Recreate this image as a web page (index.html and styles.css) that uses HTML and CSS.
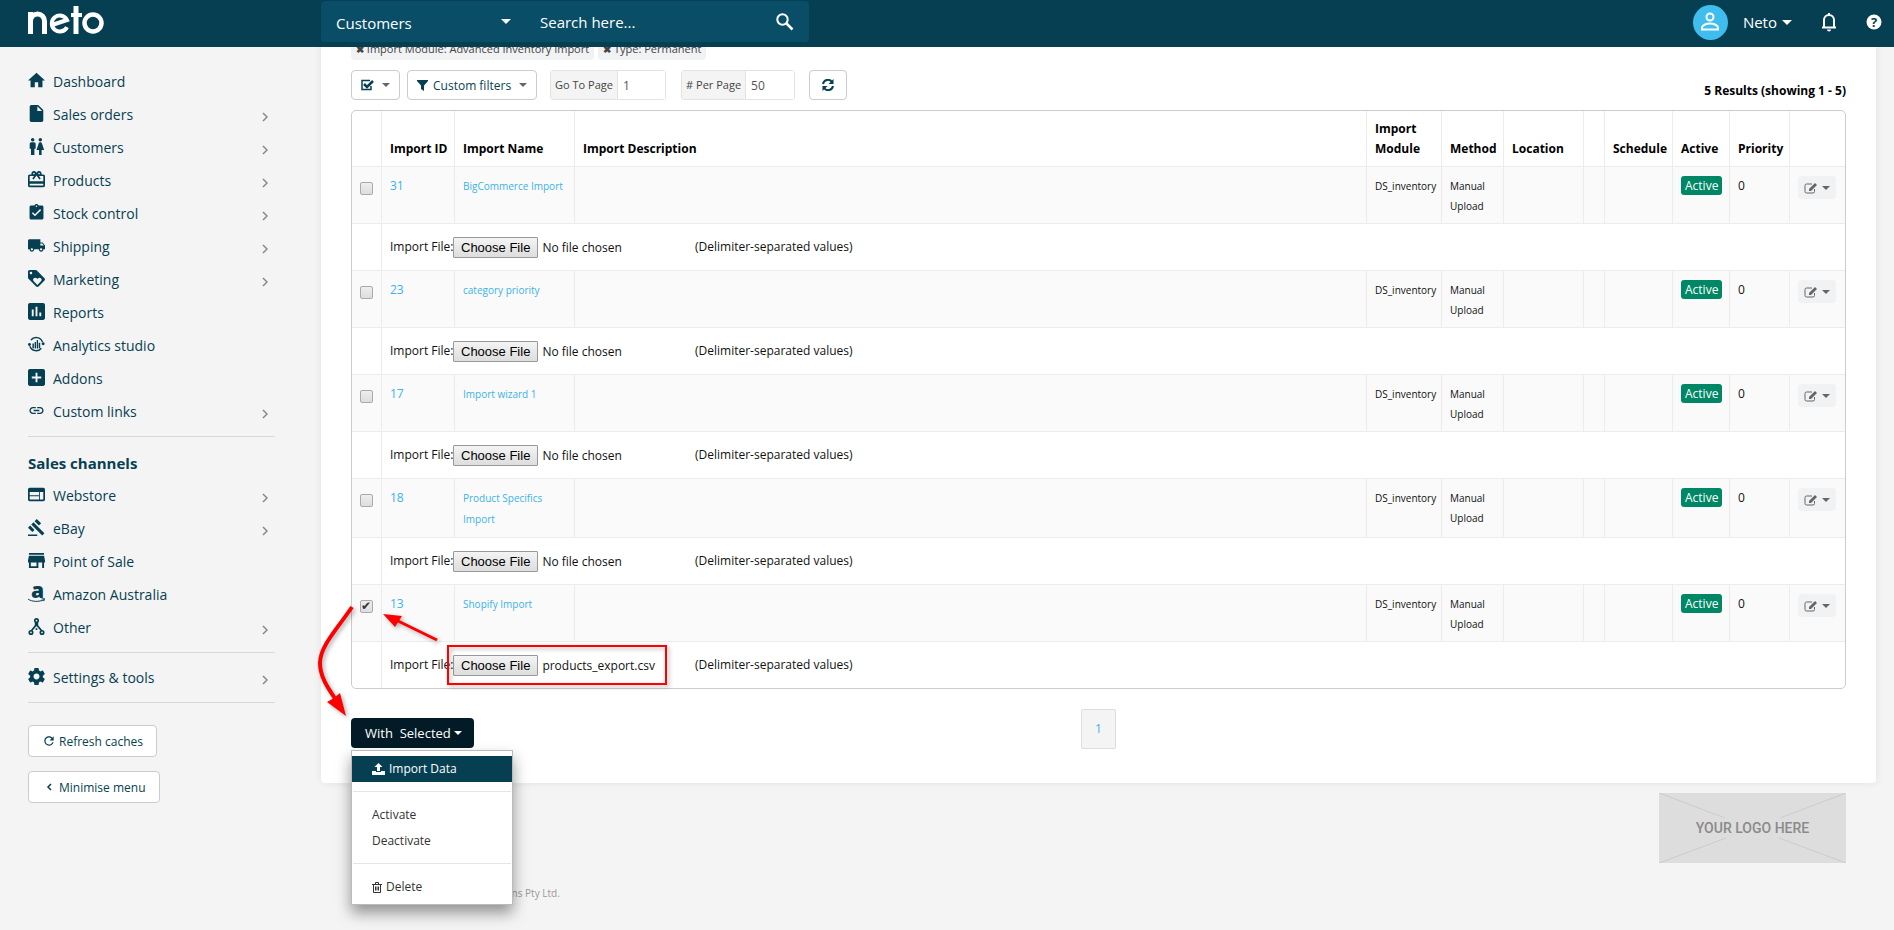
FILE: index.html
```html
<!DOCTYPE html>
<html lang="en">
<head>
    <meta charset="UTF-8">
    <meta name="viewport" content="width=device-width, initial-scale=1.0">
    <title>Neto - Import Data</title>
    <link rel="stylesheet" href="styles.css">
</head>
<body>
    <!-- icon sprite -->
    <svg class="sprite" width="0" height="0" aria-hidden="true">
        <symbol id="i-home" viewBox="2 2 20 20"><path d="M10 20v-6h4v6h5v-8h3L12 3 2 12h3v8z"/></symbol>
        <symbol id="i-file" viewBox="2 2 20 20"><path d="M6 2c-1.100 0-2 .9-2 2v16c0 1.100.9 2 2 2h12c1.100 0 2-.9 2-2V8l-6-6H6zm7 7V3.500L18.500 9H13z"/></symbol>
        <symbol id="i-people" viewBox="2 2 20 20"><path d="M5.500 22v-7.500H4V9c0-1.100.9-2 2-2h3c1.100 0 2 .9 2 2v5.500H9.500V22h-4zM18 22v-6h3l-2.540-7.630C18.180 7.550 17.420 7 16.560 7h-.12c-.86 0-1.630.55-1.900 1.370L12 16h3v6h3zM7.500 6c1.110 0 2-.89 2-2s-.89-2-2-2-2 .89-2 2 .89 2 2 2zm9 0c1.110 0 2-.89 2-2s-.89-2-2-2-2 .89-2 2 .89 2 2 2z"/></symbol>
        <symbol id="i-gift" viewBox="2 2 20 20"><path d="M20 6h-2.180c.11-.31.18-.65.18-1 0-1.660-1.340-3-3-3-1.050 0-1.960.54-2.500 1.350l-.5.670-.5-.680C10.960 2.540 10.050 2 9 2 7.340 2 6 3.340 6 5c0 .35.07.69.18 1H4c-1.110 0-1.990.89-1.990 2L2 19c0 1.110.89 2 2 2h16c1.110 0 2-.89 2-2V8c0-1.110-.89-2-2-2zm-5-2c.55 0 1 .45 1 1s-.45 1-1 1-1-.45-1-1 .45-1 1-1zM9 4c.55 0 1 .45 1 1s-.45 1-1 1-1-.45-1-1 .45-1 1-1zm11 15H4v-2h16v2zm0-5H4V8h5.080L7 10.830 8.620 12 11 8.760l1-1.360 1 1.360L15.380 12 17 10.830 14.920 8H20v6z"/></symbol>
        <symbol id="i-clip" viewBox="1 1 22 22"><path d="M19 3h-4.180C14.400 1.840 13.300 1 12 1c-1.300 0-2.400.84-2.820 2H5c-1.100 0-2 .9-2 2v14c0 1.100.9 2 2 2h14c1.100 0 2-.9 2-2V5c0-1.100-.9-2-2-2zm-7 0c.55 0 1 .45 1 1s-.45 1-1 1-1-.45-1-1 .45-1 1-1zm-2 14l-4-4 1.410-1.410L10 14.170l6.590-6.590L18 9l-8 8z"/></symbol>
        <symbol id="i-truck" viewBox="1 1 22 22"><path d="M20 8h-3V4H3c-1.100 0-2 .9-2 2v11h2c0 1.660 1.340 3 3 3s3-1.340 3-3h6c0 1.660 1.340 3 3 3s3-1.340 3-3h2v-5l-3-4zM6 18.500c-.83 0-1.500-.67-1.500-1.500s.67-1.500 1.500-1.500 1.500.67 1.500 1.500-.67 1.500-1.500 1.500zm13.500-9l1.960 2.500H17V9.500h2.500zm-1.500 9c-.83 0-1.500-.67-1.500-1.500s.67-1.500 1.500-1.500 1.500.67 1.500 1.500-.67 1.500-1.500 1.500z"/></symbol>
        <symbol id="i-tag" viewBox="2 2 20 20"><path d="M21.410 11.580l-9-9C12.050 2.220 11.550 2 11 2H4c-1.100 0-2 .9-2 2v7c0 .55.22 1.050.59 1.420l9 9c.36.36.86.58 1.410.58.55 0 1.050-.22 1.410-.59l7-7c.37-.36.59-.86.59-1.410 0-.55-.23-1.060-.59-1.420zM5.500 7C4.670 7 4 6.330 4 5.500S4.670 4 5.500 4 7 4.670 7 5.500 6.330 7 5.500 7zm11.770 8.270L13 19.540l-4.270-4.270C8.280 14.810 8 14.190 8 13.500c0-1.380 1.120-2.500 2.500-2.500.69 0 1.320.28 1.770.74l.73.720.73-.73c.45-.45 1.080-.73 1.770-.73 1.380 0 2.500 1.120 2.500 2.500 0 .69-.28 1.320-.73 1.770z"/></symbol>
        <symbol id="i-chart" viewBox="3 3 18 18"><path d="M19 3H5c-1.100 0-2 .9-2 2v14c0 1.100.9 2 2 2h14c1.100 0 2-.9 2-2V5c0-1.100-.9-2-2-2zM9 17H7v-7h2v7zm4 0h-2V7h2v10zm4 0h-2v-4h2v4z"/></symbol>
        <symbol id="i-analytics" viewBox="1 1 23 23"><path d="M5 6.500A9 9 0 0 1 20.500 9M3.500 15A9 9 0 0 0 19 17.500" fill="none" stroke="currentColor" stroke-width="2"/><circle cx="3" cy="12.500" r="2"/><circle cx="21.500" cy="11.500" r="2"/><path d="M7 11h2v6.500H7zM10 9h1.800v9H10zM12.800 6.500h1.800V18h-1.800zM15.500 10h2v7.500h-2z"/></symbol>
        <symbol id="i-add" viewBox="3 3 18 18"><path d="M19 3H5c-1.110 0-2 .9-2 2v14c0 1.100.89 2 2 2h14c1.100 0 2-.9 2-2V5c0-1.100-.9-2-2-2zm-2 10h-4v4h-2v-4H7v-2h4V7h2v4h4v2z"/></symbol>
        <symbol id="i-link" viewBox="0 0 24 24"><path d="M3.900 12c0-1.710 1.390-3.100 3.100-3.100h4V7H7c-2.760 0-5 2.240-5 5s2.240 5 5 5h4v-1.900H7c-1.710 0-3.100-1.390-3.100-3.100zM8 13h8v-2H8v2zm9-6h-4v1.900h4c1.710 0 3.100 1.390 3.100 3.100s-1.390 3.100-3.100 3.100h-4V17h4c2.760 0 5-2.240 5-5s-2.240-5-5-5z"/></symbol>
        <symbol id="i-web" viewBox="2 2 20 20"><path d="M20 4H4c-1.100 0-1.990.9-1.990 2L2 18c0 1.100.9 2 2 2h16c1.100 0 2-.9 2-2V6c0-1.100-.9-2-2-2zm-5 14H4v-4h11v4zm0-5H4V9h11v4zm5 5h-4V9h4v9z"/></symbol>
        <symbol id="i-gavel" viewBox="1 1 22 22"><path d="M1 21h12v2H1zM5.240 8.070l2.830-2.830 14.140 14.140-2.830 2.830zM12.320 1l5.660 5.660-2.830 2.830-5.660-5.660zM3.830 9.480l5.660 5.660-2.830 2.830L1 12.310z"/></symbol>
        <symbol id="i-store" viewBox="3 3 18 18"><path d="M20 4H4v2h16V4zm1 10v-2l-1-5H4l-1 5v2h1v6h10v-6h4v6h2v-6h1zm-9 4H6v-4h6v4z"/></symbol>
        <symbol id="i-nodes" viewBox="2 2 20 20"><g fill="none" stroke="currentColor" stroke-width="2"><circle cx="12" cy="5" r="2"/><circle cx="5.500" cy="19" r="2"/><circle cx="18.500" cy="19" r="2"/><path d="M11 7v4l-5 6M13 7v4l5 6M11 15h2"/></g></symbol>
        <symbol id="i-gear" viewBox="2 2 20 20"><path d="M19.430 12.980c.04-.32.07-.64.07-.98s-.03-.66-.07-.98l2.110-1.650c.19-.15.24-.42.12-.64l-2-3.460c-.12-.22-.39-.3-.61-.22l-2.490 1c-.52-.4-1.080-.73-1.690-.98l-.38-2.650C14.460 2.180 14.250 2 14 2h-4c-.25 0-.46.18-.49.42l-.38 2.650c-.61.25-1.170.59-1.690.98l-2.490-1c-.23-.09-.49 0-.61.22l-2 3.460c-.13.22-.07.49.12.64l2.110 1.650c-.04.32-.07.65-.07.98s.03.66.07.98l-2.110 1.650c-.19.15-.24.42-.12.64l2 3.460c.12.22.39.3.61.22l2.490-1c.52.4 1.080.73 1.690.98l.38 2.650c.03.24.24.42.49.42h4c.25 0 .46-.18.49-.42l.38-2.650c.61-.25 1.170-.59 1.690-.98l2.490 1c.23.09.49 0 .61-.22l2-3.460c.12-.22.07-.49-.12-.64l-2.110-1.650zM12 15.500c-1.930 0-3.500-1.570-3.500-3.500s1.570-3.500 3.500-3.500 3.500 1.570 3.500 3.500-1.570 3.500-3.500 3.500z"/></symbol>
        <symbol id="i-chevron" viewBox="0 0 6 10"><path d="M1 1l4 4-4 4" fill="none" stroke="currentColor" stroke-width="1.500"/></symbol>
        <symbol id="i-refresh" viewBox="0 0 24 24"><path d="M17.650 6.350C16.200 4.900 14.210 4 12 4c-4.420 0-7.990 3.580-7.990 8s3.570 8 7.990 8c3.730 0 6.840-2.550 7.730-6h-2.080c-.82 2.330-3.040 4-5.650 4-3.310 0-6-2.690-6-6s2.690-6 6-6c1.660 0 3.140.69 4.220 1.780L13 11h7V4l-2.350 2.350z"/></symbol>
        <symbol id="i-search" viewBox="0 0 18 18"><circle cx="6.500" cy="6.500" r="5.200" fill="none" stroke="currentColor" stroke-width="2"/><path d="M10.500 10.500l6 6" stroke="currentColor" stroke-width="2.500"/></symbol>
        <symbol id="i-edit" viewBox="0 0 14 12"><path d="M10.500 7v2.500a1.500 1.500 0 0 1-1.500 1.500H2.500A1.500 1.500 0 0 1 1 9.500v-6A1.500 1.500 0 0 1 2.500 2h5.500" fill="none" stroke="currentColor"/><path d="M5 9V7l6-6 2 2-6 6z"/></symbol>
        <symbol id="i-caret" viewBox="0 0 10 5"><path d="M0 0h10L5 5z"/></symbol>
    </svg>

    <header class="topbar">
        <a href="#" class="brand" aria-label="neto">
            <svg width="76" height="28" viewBox="0 0 76 28" fill="none" stroke="#fff" stroke-width="5">
                <path d="M2.500 28V6M2.500 15a7 7 0 0 1 14 0v13"/>
                <path d="M24 19l15-5A8 8 0 1 0 39 21" stroke-width="4"/>
                <path d="M48 0v28"/><path d="M43 9h11" stroke-width="4"/>
                <circle cx="65" cy="17" r="8.500" stroke-width="4.500"/>
            </svg>
        </a>
        <form class="search">
            <div class="select-wrap">
                <select class="search-type" aria-label="Search in">
                    <option>Customers</option>
                    <option>Products</option>
                    <option>Sales orders</option>
                </select>
                <svg class="caret" width="10" height="5"><use href="#i-caret"/></svg>
            </div>
            <input type="text" class="search-text" placeholder="Search here..." aria-label="Search">
            <button type="button" class="search-btn" aria-label="Search"><svg width="18" height="18"><use href="#i-search"/></svg></button>
        </form>
        <div class="account">
            <button type="button" class="user">
                <span class="avatar"><svg width="20" height="20" viewBox="0 0 20 20" fill="none" stroke="#fff" stroke-width="2"><circle cx="10" cy="5" r="3.500"/><path d="M2 17.500v-2c0-2 4-4 8-4s8 2 8 4v2z"/></svg></span>
                Neto
                <svg class="caret" width="10" height="5"><use href="#i-caret"/></svg>
            </button>
            <button type="button" class="icon-btn" aria-label="Notifications"><svg width="16" height="20" viewBox="0 0 16 20"><path d="M3 15V8a5 5 0 0 1 10 0v7M1 15.500h14" fill="none" stroke="#fff" stroke-width="2"/><path d="M7 1h2v3H7zM6 17.500h4a2 2 0 0 1-4 0z" fill="#fff"/></svg></button>
            <button type="button" class="icon-btn" aria-label="Help"><svg width="16" height="16" viewBox="0 0 16 16"><circle cx="8" cy="8" r="7.500" fill="#fff"/><text x="8" y="13" text-anchor="middle" font-family="Open Sans" font-weight="700" font-size="13" fill="#073f52">?</text></svg></button>
        </div>
    </header>

    <div class="layout">
        <aside class="sidebar">
            <nav>
                <ul class="menu">
                    <li><a href="#"><svg><use href="#i-home"/></svg>Dashboard</a></li>
                    <li><a href="#"><svg><use href="#i-file"/></svg>Sales orders<svg class="more"><use href="#i-chevron"/></svg></a></li>
                    <li><a href="#"><svg><use href="#i-people"/></svg>Customers<svg class="more"><use href="#i-chevron"/></svg></a></li>
                    <li><a href="#"><svg><use href="#i-gift"/></svg>Products<svg class="more"><use href="#i-chevron"/></svg></a></li>
                    <li><a href="#"><svg><use href="#i-clip"/></svg>Stock control<svg class="more"><use href="#i-chevron"/></svg></a></li>
                    <li><a href="#"><svg><use href="#i-truck"/></svg>Shipping<svg class="more"><use href="#i-chevron"/></svg></a></li>
                    <li><a href="#"><svg><use href="#i-tag"/></svg>Marketing<svg class="more"><use href="#i-chevron"/></svg></a></li>
                    <li><a href="#"><svg><use href="#i-chart"/></svg>Reports</a></li>
                    <li><a href="#"><svg><use href="#i-analytics"/></svg>Analytics studio</a></li>
                    <li><a href="#"><svg><use href="#i-add"/></svg>Addons</a></li>
                    <li><a href="#"><svg><use href="#i-link"/></svg>Custom links<svg class="more"><use href="#i-chevron"/></svg></a></li>
                </ul>
                <h2>Sales channels</h2>
                <ul class="menu">
                    <li><a href="#"><svg><use href="#i-web"/></svg>Webstore<svg class="more"><use href="#i-chevron"/></svg></a></li>
                    <li><a href="#"><svg><use href="#i-gavel"/></svg>eBay<svg class="more"><use href="#i-chevron"/></svg></a></li>
                    <li><a href="#"><svg><use href="#i-store"/></svg>Point of Sale</a></li>
                    <li><a href="#"><svg class="amazon" viewBox="0 0 17 17"><text x="3" y="13" font-family="Open Sans" font-weight="800" font-size="21">a</text><path d="M0 14c4 3 11 3 16 .8M13.500 14l3-.3-.8 2.500" fill="none" stroke="currentColor"/></svg>Amazon Australia</a></li>
                    <li><a href="#"><svg><use href="#i-nodes"/></svg>Other<svg class="more"><use href="#i-chevron"/></svg></a></li>
                </ul>
                <ul class="menu">
                    <li><a href="#"><svg><use href="#i-gear"/></svg>Settings &amp; tools<svg class="more"><use href="#i-chevron"/></svg></a></li>
                </ul>
            </nav>
            <div class="side-buttons">
                <button type="button" class="btn"><svg width="14" height="14"><use href="#i-refresh"/></svg>Refresh caches</button>
                <button type="button" class="btn"><svg width="14" height="8" viewBox="0 0 14 8" fill="none"><path d="M9 1L6 4l3 3" stroke="currentColor" stroke-width="1.500"/></svg>Minimise menu</button>
            </div>
        </aside>

        <main class="content">
            <section class="panel">
                <div class="tags">
                    <a href="#" class="tag"><b>✖</b> Import Module: Advanced Inventory Import</a>
                    <a href="#" class="tag"><b>✖</b> Type: Permanent</a>
                </div>
                <div class="toolbar">
                    <button type="button" class="btn" aria-label="Select rows">
                        <svg width="13" height="12" viewBox="0 0 13 12" fill="none"><path d="M10 7v3.500H1v-9h8" stroke="currentColor" stroke-width="1.500"/><path d="M3 5l3 3 6-6" stroke="currentColor" stroke-width="2.500"/></svg>
                        <svg class="caret" width="8" height="4"><use href="#i-caret"/></svg>
                    </button>
                    <button type="button" class="btn">
                        <svg width="11" height="11" viewBox="0 0 11 11"><path d="M0 0h11v1L7 5.500V11L4 9V5.500L0 1z"/></svg>
                        Custom filters
                        <svg class="caret" width="8" height="4"><use href="#i-caret"/></svg>
                    </button>
                    <div class="group goto">
                        <label for="goto">Go To Page</label>
                        <input type="text" id="goto" value="1">
                    </div>
                    <div class="group per">
                        <label for="per"># Per Page</label>
                        <input type="text" id="per" value="50">
                    </div>
                    <button type="button" class="btn reload" aria-label="Reload">
                        <svg width="12" height="12" viewBox="0 0 12 12" fill="none" stroke="currentColor" stroke-width="2"><path d="M1 5a5 5 0 0 1 9-2M11 7a5 5 0 0 1-9 2"/><path d="M11.500 0v5h-5zM.5 12V7h5z" fill="currentColor" stroke="none"/></svg>
                    </button>
                    <strong class="results">5 Results (showing 1 - 5)</strong>
                </div>

                <table class="grid">
                    <colgroup>
                        <col class="c-check"><col class="c-id"><col class="c-name"><col><col class="c-module"><col class="c-method"><col class="c-location"><col class="c-blank"><col class="c-schedule"><col class="c-active"><col class="c-priority"><col class="c-actions">
                    </colgroup>
                    <thead>
                        <tr>
                            <th></th>
                            <th>Import ID</th>
                            <th>Import Name</th>
                            <th>Import Description</th>
                            <th>Import<br>Module</th>
                            <th>Method</th>
                            <th>Location</th>
                            <th></th>
                            <th>Schedule</th>
                            <th>Active</th>
                            <th>Priority</th>
                            <th></th>
                        </tr>
                    </thead>
                    <tbody>
                        <tr class="item">
                            <td><input type="checkbox" aria-label="Select import 31"></td>
                            <td><a href="#">31</a></td>
                            <td class="name"><a href="#">BigCommerce Import</a></td>
                            <td></td>
                            <td class="small">DS_inventory</td>
                            <td class="small">Manual<br>Upload</td>
                            <td></td><td></td><td></td>
                            <td><span class="label">Active</span></td>
                            <td>0</td>
                            <td><button type="button" class="edit" aria-label="Edit import 31"><svg width="14" height="12"><use href="#i-edit"/></svg><svg class="caret" width="8" height="4"><use href="#i-caret"/></svg></button></td>
                        </tr>
                        <tr class="upload">
                            <td></td>
                            <td colspan="11"><div class="file-row"><label for="file31">Import File:</label><input type="file" id="file31"><span>(Delimiter-separated values)</span></div></td>
                        </tr>
                        <tr class="item">
                            <td><input type="checkbox" aria-label="Select import 23"></td>
                            <td><a href="#">23</a></td>
                            <td class="name"><a href="#">category priority</a></td>
                            <td></td>
                            <td class="small">DS_inventory</td>
                            <td class="small">Manual<br>Upload</td>
                            <td></td><td></td><td></td>
                            <td><span class="label">Active</span></td>
                            <td>0</td>
                            <td><button type="button" class="edit" aria-label="Edit import 23"><svg width="14" height="12"><use href="#i-edit"/></svg><svg class="caret" width="8" height="4"><use href="#i-caret"/></svg></button></td>
                        </tr>
                        <tr class="upload">
                            <td></td>
                            <td colspan="11"><div class="file-row"><label for="file23">Import File:</label><input type="file" id="file23"><span>(Delimiter-separated values)</span></div></td>
                        </tr>
                        <tr class="item">
                            <td><input type="checkbox" aria-label="Select import 17"></td>
                            <td><a href="#">17</a></td>
                            <td class="name"><a href="#">Import wizard 1</a></td>
                            <td></td>
                            <td class="small">DS_inventory</td>
                            <td class="small">Manual<br>Upload</td>
                            <td></td><td></td><td></td>
                            <td><span class="label">Active</span></td>
                            <td>0</td>
                            <td><button type="button" class="edit" aria-label="Edit import 17"><svg width="14" height="12"><use href="#i-edit"/></svg><svg class="caret" width="8" height="4"><use href="#i-caret"/></svg></button></td>
                        </tr>
                        <tr class="upload">
                            <td></td>
                            <td colspan="11"><div class="file-row"><label for="file17">Import File:</label><input type="file" id="file17"><span>(Delimiter-separated values)</span></div></td>
                        </tr>
                        <tr class="item">
                            <td><input type="checkbox" aria-label="Select import 18"></td>
                            <td><a href="#">18</a></td>
                            <td class="name"><a href="#">Product Specifics<br>Import</a></td>
                            <td></td>
                            <td class="small">DS_inventory</td>
                            <td class="small">Manual<br>Upload</td>
                            <td></td><td></td><td></td>
                            <td><span class="label">Active</span></td>
                            <td>0</td>
                            <td><button type="button" class="edit" aria-label="Edit import 18"><svg width="14" height="12"><use href="#i-edit"/></svg><svg class="caret" width="8" height="4"><use href="#i-caret"/></svg></button></td>
                        </tr>
                        <tr class="upload">
                            <td></td>
                            <td colspan="11"><div class="file-row"><label for="file18">Import File:</label><input type="file" id="file18"><span>(Delimiter-separated values)</span></div></td>
                        </tr>
                        <tr class="item">
                            <td><input type="checkbox" aria-label="Select import 13" checked></td>
                            <td><a href="#">13</a></td>
                            <td class="name"><a href="#">Shopify Import</a></td>
                            <td></td>
                            <td class="small">DS_inventory</td>
                            <td class="small">Manual<br>Upload</td>
                            <td></td><td></td><td></td>
                            <td><span class="label">Active</span></td>
                            <td>0</td>
                            <td><button type="button" class="edit" aria-label="Edit import 13"><svg width="14" height="12"><use href="#i-edit"/></svg><svg class="caret" width="8" height="4"><use href="#i-caret"/></svg></button></td>
                        </tr>
                        <tr class="upload">
                            <td></td>
                            <td colspan="11"><div class="file-row"><label for="file13">Import File:</label><input type="file" id="file13"><span>(Delimiter-separated values)</span></div></td>
                        </tr>
                    </tbody>
                </table>

                <div class="actions">
                    <div class="dropdown">
                        <button type="button" class="btn-dark">With&nbsp; Selected <svg class="caret" width="8" height="4"><use href="#i-caret"/></svg></button>
                        <ul class="dropdown-menu">
                            <li><a href="#" class="active"><svg width="13" height="12" viewBox="0 0 13 12"><path d="M6.500 0l4 4H8v4H5V4H2.500zM0 8h4v1h5V8h4v4H0z"/></svg>Import Data</a></li>
                            <li class="divider"></li>
                            <li><a href="#">Activate</a></li>
                            <li><a href="#">Deactivate</a></li>
                            <li class="divider"></li>
                            <li><a href="#"><svg width="10" height="11" viewBox="0 0 10 11" fill="none" stroke="currentColor"><path d="M0 2.500h10M3.500 2V.5h3V2M1.500 3v7.500h7V3M3.500 4.500v4M5 4.500v4M6.500 4.500v4"/></svg>Delete</a></li>
                        </ul>
                    </div>
                    <a href="#" class="page">1</a>
                </div>

                <!-- guide arrows -->
                <svg class="guide" width="360" height="170" viewBox="310 580 360 170">
                    <g fill="none" stroke="#f00">
                        <path d="M352 607C338 628 320 646 320 663C320 677 328 688 336 700" stroke-width="4"/>
                        <path d="M437 640L396 620" stroke-width="3"/>
                        <rect x="448" y="646" width="218" height="38" stroke-width="2"/>
                    </g>
                    <g fill="#f00"><path d="M346 716l-19-14 7-4 6-5z"/><path d="M383 614l19 2-7 11z"/></g>
                </svg>
            </section>
            <footer class="footer">
                <p>© 2018 - Neto E-commerce Solutions Pty Ltd.</p>
                <div class="logo-box">
                    <svg width="100%" height="100%" viewBox="0 0 187 70" preserveAspectRatio="none" stroke="#ccc"><path d="M0 0l66 25M187 0l-66 25M0 70l67-25M187 70l-67-25"/></svg>
                    <span>YOUR LOGO HERE</span>
                </div>
            </footer>
        </main>
    </div>

    <script>
        // attach the exported catalogue to the last import row
        const files = new DataTransfer();
        files.items.add(new File(['sku,name'], 'products_export.csv', { type: 'text/csv' }));
        document.getElementById('file13').files = files.files;
    </script>
</body>
</html>
```
FILE: styles.css
```css
* {
    box-sizing: border-box;
}
body {
    margin: 0;
    font-family: 'Open Sans', 'Noto Sans', sans-serif;
    font-size: 12px;
    line-height: 20px;
    color: #111;
    background: #f4f4f4;
}
a {
    color: #3bb3e8;
    text-decoration: none;
}
ul {
    list-style: none;
    margin: 0;
    padding: 0;
}
button, input, select {
    font-family: inherit;
    font-size: inherit;
    color: inherit;
}
button {
    cursor: pointer;
}
svg {
    flex: none;
}
svg:not([fill]) {
    fill: currentColor;
}
.sprite {
    position: absolute;
}

/* top bar */
.topbar {
    position: sticky;
    top: 0;
    z-index: 10;
    display: flex;
    align-items: flex-start;
    height: 47px;
    background: #073f52;
    color: #fff;
}
.brand {
    width: 321px;
    padding: 6px 28px 0;
}
.brand svg {
    display: block;
}
.search {
    display: flex;
    align-items: center;
    width: 488px;
    height: 41px;
    margin-top: 1px;
    background: #0a4d66;
    border-radius: 4px;
    font-size: 15px;
}
.select-wrap {
    display: flex;
    align-items: center;
    width: 204px;
}
.search-type {
    flex: 1;
    appearance: none;
    padding: 2px 15px 0;
    border: 0;
    background: none;
}
.search-type option {
    color: #111;
}
.select-wrap .caret {
    margin-right: 14px;
}
.search-text {
    flex: 1;
    min-width: 0;
    padding: 0 15px;
    border: 0;
    background: none;
}
.search-text::placeholder {
    color: #fff;
}
.search-btn {
    padding: 0;
    margin-right: 15px;
    border: 0;
    background: none;
    line-height: 0;
}
.account {
    display: flex;
    align-items: center;
    gap: 29px;
    height: 44px;
    margin-left: auto;
    padding-right: 12px;
}
.user {
    display: flex;
    align-items: center;
    gap: 5px;
    padding: 0;
    border: 0;
    background: none;
    font-size: 15px;
}
.avatar {
    display: flex;
    align-items: center;
    justify-content: center;
    width: 35px;
    height: 35px;
    margin-right: 10px;
    border-radius: 50%;
    background: #3fbdee;
}
.icon-btn {
    padding: 0;
    border: 0;
    background: none;
    line-height: 0;
}

.layout {
    display: flex;
    min-height: calc(100vh - 47px);
}

/* sidebar */
.sidebar {
    width: 321px;
    padding: 18px 46px 0 28px;
    color: #073f52;
}
.menu {
    margin-bottom: 8px;
    padding-bottom: 8px;
    border-bottom: 1px solid #d8d8d8;
}
.menu a {
    display: flex;
    align-items: center;
    height: 33px;
    font-size: 14px;
    color: #073f52;
}
.menu svg {
    width: 17px;
    height: 17px;
    margin: 0 8px 2px 0;
}
.menu .amazon {
    overflow: visible;
}
.menu .more {
    width: 6px;
    height: 10px;
    margin: 4px 7px 0 auto;
    color: #888;
}
.sidebar h2 {
    margin: 16px 0 6px;
    font-size: 15px;
    line-height: 20px;
}
.side-buttons {
    display: flex;
    flex-direction: column;
    align-items: flex-start;
    gap: 14px;
    margin-top: 22px;
}
.btn {
    display: flex;
    align-items: center;
    gap: 5px;
    height: 30px;
    padding: 0 9px;
    border: 1px solid #ccc;
    border-radius: 4px;
    background: #fff;
    color: #073f52;
}
.side-buttons .btn {
    height: 32px;
    padding: 0 13px;
    gap: 3px;
}
.btn .caret {
    margin-left: 3px;
    color: #666;
}

/* main panel */
.content {
    flex: 1;
    min-width: 0;
    padding-right: 18px;
}
.panel {
    position: relative;
    margin-top: -9px;
    padding: 0 30px 34px;
    border-radius: 0 0 4px 4px;
    background: #fff;
    box-shadow: 0 0 8px rgba(0, 0, 0, 0.08);
}
.tags {
    display: flex;
    gap: 4px;
}
.tag {
    padding: 1px 5px;
    border-radius: 4px;
    background: #f1f2f4;
    font-size: 11px;
    color: #444;
}
.tag b {
    font-size: 10px;
}
.toolbar {
    display: flex;
    align-items: center;
    height: 30px;
    margin: 10px 0;
}
.toolbar .btn {
    margin-right: 7px;
}
.group {
    display: flex;
    height: 30px;
    border: 1px solid #e3e3e3;
    border-radius: 3px;
}
.group label {
    padding: 4px;
    border-right: 1px solid #e3e3e3;
    background: #f4f4f4;
    font-size: 11px;
    white-space: nowrap;
    color: #444;
}
.group input {
    flex: 1;
    min-width: 0;
    padding: 0 5px;
    border: 0;
    color: #555;
}
.goto {
    width: 116px;
    margin-left: 6px;
}
.per {
    width: 114px;
    margin: 0 14px 0 15px;
}
.toolbar .reload {
    padding: 0 12px;
}
.results {
    margin-left: auto;
    padding-top: 11px;
    color: #000;
}

/* imports table */
.grid {
    width: 100%;
    table-layout: fixed;
    border: 1px solid #ccc;
    border-radius: 5px;
    border-collapse: separate;
    border-spacing: 0;
}
.c-check { width: 29px; }
.c-id { width: 73px; }
.c-name { width: 120px; }
.c-module { width: 75px; }
.c-method { width: 62px; }
.c-location { width: 80px; }
.c-blank { width: 21px; }
.c-schedule { width: 68px; }
.c-active { width: 57px; }
.c-priority { width: 60px; }
.c-actions { width: 56px; }
.grid th, .grid td {
    padding: 8px 0 8px 8px;
    border-left: 1px solid #ececec;
    text-align: left;
    vertical-align: top;
    white-space: nowrap;
}
.grid th {
    padding-bottom: 7px;
    vertical-align: bottom;
    color: #000;
}
.grid td {
    border-top: 1px solid #ececec;
}
.grid th:first-child, .grid td:first-child {
    border-left: 0;
}
.grid .item td {
    padding: 9px 0 7px 8px;
    background: #fafafa;
}
.grid .small {
    font-size: 10px;
}
.name a {
    display: block;
    font-size: 10px;
    line-height: 21px;
}
.grid input[type="checkbox"] {
    appearance: none;
    display: block;
    width: 13px;
    height: 13px;
    margin: 6px 0 0;
    border: 1px solid #aaa;
    border-radius: 2px;
    background: linear-gradient(#eee, #ddd);
}
.grid input[type="checkbox"]:checked::before {
    content: '✔';
    display: block;
    color: #333;
    font-size: 12px;
    line-height: 10px;
}
.label {
    display: inline-block;
    padding: 0 4px;
    border-radius: 3px;
    background: #008866;
    line-height: 19px;
    color: #fff;
}
.edit {
    display: flex;
    align-items: center;
    gap: 4px;
    height: 23px;
    padding: 0 6px;
    border: 0;
    border-radius: 4px;
    background: #f1f2f4;
    color: #666;
}
.file-row {
    display: flex;
    align-items: center;
    height: 30px;
}
.file-row label {
    width: 63px;
}
.file-row input {
    width: 242px;
}
.file-row input::file-selector-button {
    height: 21px;
    margin-right: 4px;
    padding: 0 7px;
    border: 1px solid #999;
    border-radius: 1px;
    background: linear-gradient(#f4f4f4, #ddd);
    font-family: 'Liberation Sans', sans-serif;
    font-size: 13px;
    color: #000;
}

/* bulk actions + pager */
.actions {
    display: grid;
    grid-template-columns: 1fr auto 1fr;
    align-items: end;
    margin-top: 20px;
}
.dropdown {
    position: relative;
    margin-bottom: 1px;
}
.btn-dark {
    display: flex;
    align-items: center;
    gap: 3px;
    height: 30px;
    padding: 0 12px 0 14px;
    border: 0;
    border-radius: 4px;
    background: #021b26;
    font-size: 13px;
    color: #fff;
}
.dropdown-menu {
    position: absolute;
    top: 32px;
    left: 0;
    z-index: 5;
    width: 162px;
    padding: 5px 0 4px;
    border: 1px solid #bbb;
    background: #fff;
    box-shadow: 0 8px 14px rgba(0, 0, 0, 0.4);
}
.dropdown-menu a {
    display: flex;
    align-items: center;
    gap: 4px;
    height: 26px;
    padding: 0 20px;
    color: #333;
}
.dropdown-menu .active {
    background: #073f52;
    color: #fff;
}
.divider {
    height: 1px;
    margin: 9px 1px 10px;
    background: #e5e5e5;
}
.page {
    width: 35px;
    height: 40px;
    border: 1px solid #ddd;
    border-radius: 2px;
    background: #f4f4f4;
    line-height: 38px;
    text-align: center;
}
.guide {
    position: absolute;
    left: -11px;
    top: 542px;
    filter: drop-shadow(2px 2px 2px rgba(0, 0, 0, 0.3));
    pointer-events: none;
}

/* footer */
.footer {
    display: flex;
    align-items: flex-start;
    justify-content: space-between;
    padding: 10px 30px 0;
}
.footer p {
    margin: 90px 0 0;
    font-size: 10px;
    color: #999;
}
.logo-box {
    display: grid;
    place-items: center;
    width: 187px;
    height: 70px;
    background: #ddd;
}
.logo-box svg, .logo-box span {
    grid-area: 1 / 1;
}
.logo-box span {
    font-family: Roboto, sans-serif;
    font-size: 14px;
    font-weight: 500;
    color: #8a8a8a;
}
```
